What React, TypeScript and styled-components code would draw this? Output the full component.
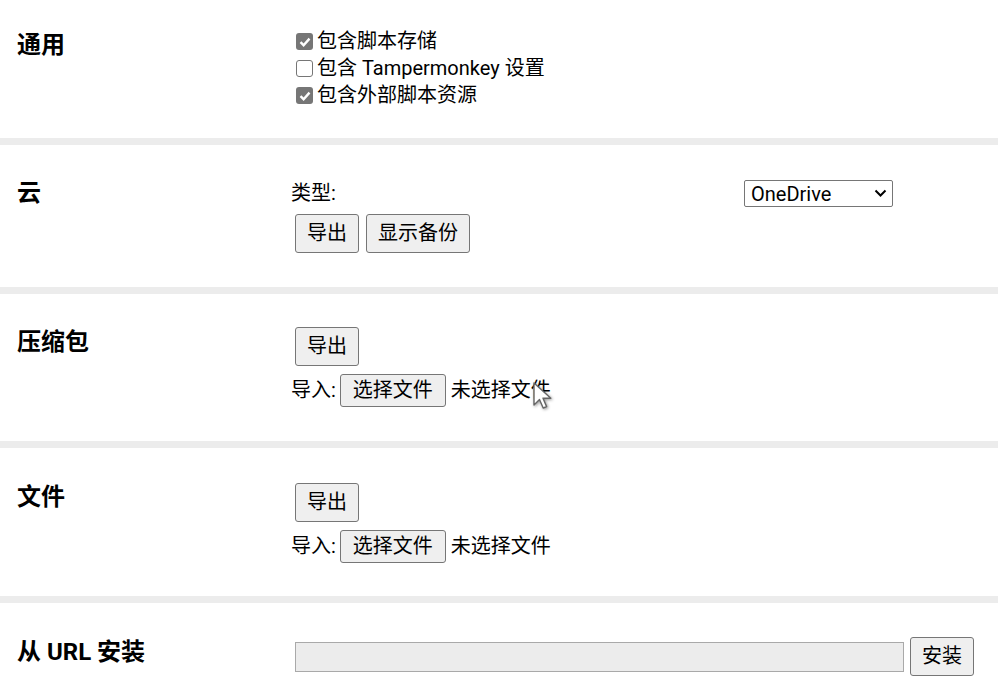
import React from 'react';
import styled, { createGlobalStyle } from 'styled-components';

const GlobalStyle = createGlobalStyle`
  html, body {
    margin: 0;
    padding: 0;
    background: #ffffff;
  }
  body {
    font-family: Roboto, 'Noto Sans CJK SC', sans-serif;
    font-size: 20px;
    color: #000000;
    overflow: hidden;
  }
`;

const Page = styled.div`
  position: relative;
  width: 998px;
  height: 687px;
  overflow: hidden;
`;

const Section = styled.section<{ $top: number; $bottom: number; $last?: boolean }>`
  display: grid;
  grid-template-columns: 274px 1fr;
  padding: ${({ $top }) => $top}px 20px ${({ $bottom }) => $bottom}px 17px;
  border-bottom: ${({ $last }) => ($last ? '1px solid #cfcfcf' : '7px solid #ececec')};
`;

const Heading = styled.h2<{ $shift?: number }>`
  margin: ${({ $shift }) => $shift || 0}px 0 0;
  font-size: 24px;
  line-height: 28px;
  font-weight: 700;
  white-space: nowrap;
`;

const Content = styled.div`
  display: flex;
  flex-direction: column;
  align-items: flex-start;
`;

const CheckRow = styled.label`
  display: flex;
  align-items: center;
  gap: 4px;
  height: 27px;
  line-height: 27px;
  padding-left: 5px;
`;

const Box = styled.span<{ $checked: boolean }>`
  display: inline-flex;
  align-items: center;
  justify-content: center;
  box-sizing: border-box;
  width: 17px;
  height: 17px;
  border-radius: 3px;
  background: ${({ $checked }) => ($checked ? '#767676' : '#ffffff')};
  border: ${({ $checked }) => ($checked ? 'none' : '1.5px solid #767676')};
`;

const Row = styled.div<{ $mt?: number }>`
  display: flex;
  align-items: center;
  margin-top: ${({ $mt }) => $mt || 0}px;
`;

const Label = styled.span<{ $w?: number }>`
  width: ${({ $w }) => ($w ? `${$w}px` : 'auto')};
  line-height: 27px;
  white-space: nowrap;
`;

const Button = styled.button<{ $small?: boolean }>`
  flex-shrink: 0;
  white-space: nowrap;
  font-family: inherit;
  font-size: 20px;
  line-height: 27px;
  color: #000000;
  background: #efefef;
  border: 1px solid #767676;
  border-radius: 3px;
  padding: ${({ $small }) => ($small ? '2px 12px' : '5px 11px')};
  margin: 0 3px 0 4px;
`;

const SelectWrap = styled.div`
  position: relative;
  width: 149px;
  height: 27px;
`;

const Select = styled.select`
  appearance: none;
  box-sizing: border-box;
  width: 149px;
  height: 27px;
  padding: 0 0 0 6px;
  font-family: inherit;
  font-size: 20px;
  color: #000000;
  background: #ffffff;
  border: 1px solid #767676;
  border-radius: 2px;
`;

const Chevron = styled.svg`
  position: absolute;
  right: 6px;
  top: 9px;
  pointer-events: none;
`;

const UrlInput = styled.input`
  flex-shrink: 0;
  box-sizing: border-box;
  width: 609px;
  height: 30px;
  margin-left: 4px;
  background: #ececec;
  border: 1px solid #a9a9a9;
  font-family: inherit;
  font-size: 18px;
`;

const Cursor = styled.svg`
  position: absolute;
  left: 532px;
  top: 381px;
  filter: drop-shadow(1px 1px 1.5px rgba(0, 0, 0, 0.4));
`;

function Check({ checked, label }: { checked: boolean; label: string }) {
  return (
    <CheckRow>
      <Box $checked={checked}>
        {checked && (
          <svg width='12' height='10' viewBox='0 0 12 10'>
            <path d='M1.5 5.2 L4.6 8.2 L10.5 1.6' fill='none' stroke='#ffffff' strokeWidth='2.4' />
          </svg>
        )}
      </Box>
      {label}
    </CheckRow>
  );
}

function FileRow() {
  return (
    <Row $mt={8}>
      <Label>导入:</Label>
      <Button $small style={{ margin: '0 5px 0 4px' }}>选择文件</Button>
      <Label>未选择文件</Label>
    </Row>
  );
}

export default function App(): React.ReactElement {
  return (
    <Page>
      <GlobalStyle />
      <Section $top={28} $bottom={29}>
        <Heading $shift={3}>通用</Heading>
        <Content>
          <Check checked label='包含脚本存储' />
          <Check checked={false} label='包含 Tampermonkey 设置' />
          <Check checked label='包含外部脚本资源' />
        </Content>
      </Section>
      <Section $top={35} $bottom={34}>
        <Heading $shift={-1}>云</Heading>
        <Content>
          <Row>
            <Label $w={453}>类型:</Label>
            <SelectWrap>
              <Select defaultValue='onedrive'>
                <option value='onedrive'>OneDrive</option>
              </Select>
              <Chevron width='13' height='9' viewBox='0 0 13 9'>
                <path d='M1.5 1.5 L6.5 6.5 L11.5 1.5' fill='none' stroke='#000000' strokeWidth='2' />
              </Chevron>
            </SelectWrap>
          </Row>
          <Row $mt={7}>
            <Button>导出</Button>
            <Button>显示备份</Button>
          </Row>
        </Content>
      </Section>
      <Section $top={33} $bottom={34}>
        <Heading $shift={1}>压缩包</Heading>
        <Content>
          <Button>导出</Button>
          <FileRow />
        </Content>
      </Section>
      <Section $top={35} $bottom={33}>
        <Heading>文件</Heading>
        <Content>
          <Button>导出</Button>
          <FileRow />
        </Content>
      </Section>
      <Section $top={34} $bottom={11} $last>
        <Heading $shift={1}>从 URL 安装</Heading>
        <Content>
          <Row>
            <UrlInput type='text' />
            <Button style={{ margin: '0 0 0 6px' }}>安装</Button>
          </Row>
        </Content>
      </Section>
      <Cursor width='22' height='30' viewBox='0 0 22 30'>
        <path d='M2 2 L2 24 L7.5 18.5 L11.2 27 L14.6 25.6 L11 17.2 L18.8 17.2 Z' fill='#ffffff' stroke='#666666' strokeWidth='1.4' strokeLinejoin='round' />
      </Cursor>
    </Page>
  );
}
